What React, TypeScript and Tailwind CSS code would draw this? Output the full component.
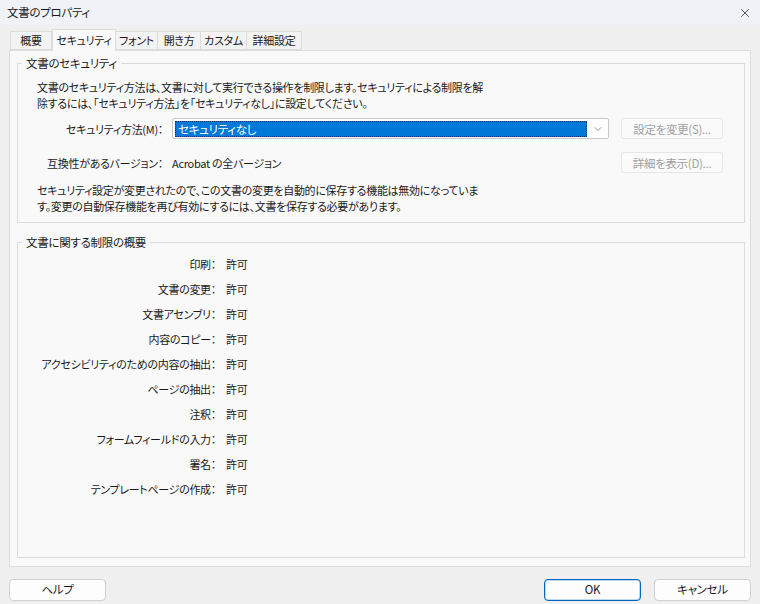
import { X, ChevronDown } from "lucide-react";

const FONT =
  "[font-family:'Noto_Sans_CJK_JP','Noto_Sans',sans-serif] [font-feature-settings:'palt'] tracking-[-0.3px]";

const TABS = [
  { label: "概要", w: "w-[42px]" },
  { label: "セキュリティ", w: "w-[64px]" },
  { label: "フォント", w: "w-[42px]" },
  { label: "開き方", w: "w-[43px]" },
  { label: "カスタム", w: "w-[46px]" },
  { label: "詳細設定", w: "w-[55px]" },
];
const ACTIVE_TAB = 1;

const RESTRICTIONS = [
  "印刷",
  "文書の変更",
  "文書アセンブリ",
  "内容のコピー",
  "アクセシビリティのための内容の抽出",
  "ページの抽出",
  "注釈",
  "フォームフィールドの入力",
  "署名",
  "テンプレートページの作成",
];

function GroupBox({
  title,
  className,
  children,
}: {
  title: string;
  className?: string;
  children: React.ReactNode;
}) {
  return (
    <div className={`relative border border-[#dcdcdc] ${className ?? ""}`}>
      <span className="absolute left-[4px] top-[-9px] bg-[#f9f9f9] px-[4px] text-[11.5px] leading-[16px] text-[#1a1a1a]">
        {title}
      </span>
      {children}
    </div>
  );
}

function DisabledButton({ label }: { label: string }) {
  return (
    <div className="flex h-[21px] w-[102px] items-center justify-center rounded-[3px] border border-[#e6e6e6] bg-[#fbfbfb] text-[11.5px] text-[#a0a0a0]">
      {label}
    </div>
  );
}

function DialogButton({ label, primary }: { label: string; primary?: boolean }) {
  return (
    <div
      className={`flex h-[22px] w-[97px] items-center justify-center rounded-[4px] border bg-[#fdfdfd] text-[11.5px] text-[#1a1a1a] ${
        primary ? "border-[#0067c0] shadow-[inset_0_0_0_1px_#bcd7f0]" : "border-[#d0d0d0]"
      }`}
    >
      {label}
    </div>
  );
}

export default function App() {
  return (
    <div className={`flex h-[604px] w-[760px] flex-col bg-[#f0f0f0] text-[#1a1a1a] ${FONT}`}>
      {/* title bar */}
      <div className="flex h-[25px] items-center justify-between bg-[#eff3f8] pl-[7px] pr-[8px]">
        <span className="text-[11.5px]">文書のプロパティ</span>
        <X size={14} strokeWidth={1.3} className="text-[#222]" />
      </div>

      {/* tabs */}
      <div className="mt-[4px] flex items-end pl-[10px]">
        {TABS.map((tab, i) =>
          i === ACTIVE_TAB ? (
            <div
              key={tab.label}
              className={`relative z-10 -mb-px flex h-[22px] items-center justify-center border border-b-0 border-[#dcdcdc] bg-[#f9f9f9] text-[11px] ${tab.w}`}
            >
              {tab.label}
            </div>
          ) : (
            <div
              key={tab.label}
              className={`flex h-[19px] items-center justify-center border border-l-0 border-[#dcdcdc] bg-[#f3f3f3] text-[11px] first:border-l ${tab.w}`}
            >
              {tab.label}
            </div>
          )
        )}
      </div>

      {/* tab panel */}
      <div className="mx-[9px] flex h-[517px] flex-col border border-[#dcdcdc] bg-[#f9f9f9] pl-[7px] pt-[12px]">
        <GroupBox title="文書のセキュリティ" className="h-[160px] w-[728px]">
          <div className="flex flex-col pl-[19px] pt-[15px] text-[11px] leading-[16px]">
            <p className="whitespace-nowrap">
              文書のセキュリティ方法は、文書に対して実行できる操作を制限します。セキュリティによる制限を解
              <br />
              除するには、「セキュリティ方法」を「セキュリティなし」に設定してください。
            </p>

            <div className="mt-[7px] flex items-center">
              <span className="w-[126px] whitespace-nowrap text-right">セキュリティ方法(M)：</span>
              <div className="ml-[9px] flex h-[21px] w-[437px] items-center rounded-[2px] border border-[#c8c8c8] bg-white pl-[2px] pr-[4px]">
                <div className="flex h-[16px] flex-1 items-center border border-dotted border-[#0a3a6a] bg-[#0078d7] pl-[2px] text-[11.5px] text-white">
                  セキュリティなし
                </div>
                <ChevronDown size={12} strokeWidth={1.4} className="ml-[5px] text-[#606060]" />
              </div>
              <div className="ml-[12px]">
                <DisabledButton label="設定を変更(S)..." />
              </div>
            </div>

            <div className="mt-[13px] flex items-center">
              <span className="w-[126px] whitespace-nowrap text-right">互換性があるバージョン：</span>
              <span className="ml-[9px] w-[437px]">Acrobat の全バージョン</span>
              <div className="ml-[12px]">
                <DisabledButton label="詳細を表示(D)..." />
              </div>
            </div>

            <p className="mt-[9px] whitespace-nowrap">
              セキュリティ設定が変更されたので、この文書の変更を自動的に保存する機能は無効になっていま
              <br />
              す。変更の自動保存機能を再び有効にするには、文書を保存する必要があります。
            </p>
          </div>
        </GroupBox>

        <GroupBox title="文書に関する制限の概要" className="mt-[19px] h-[316px] w-[728px]">
          <div className="flex flex-col pt-[9px] text-[11px]">
            {RESTRICTIONS.map((item) => (
              <div key={item} className="flex h-[25px] items-center">
                <span className="w-[198px] whitespace-nowrap text-right">{item}：</span>
                <span className="ml-[10px]">許可</span>
              </div>
            ))}
          </div>
        </GroupBox>
      </div>

      {/* footer */}
      <div className="mt-[12px] flex items-center px-[9px]">
        <DialogButton label="ヘルプ" />
        <div className="ml-auto flex gap-[13px]">
          <DialogButton label="OK" primary />
          <DialogButton label="キャンセル" />
        </div>
      </div>
    </div>
  );
}
